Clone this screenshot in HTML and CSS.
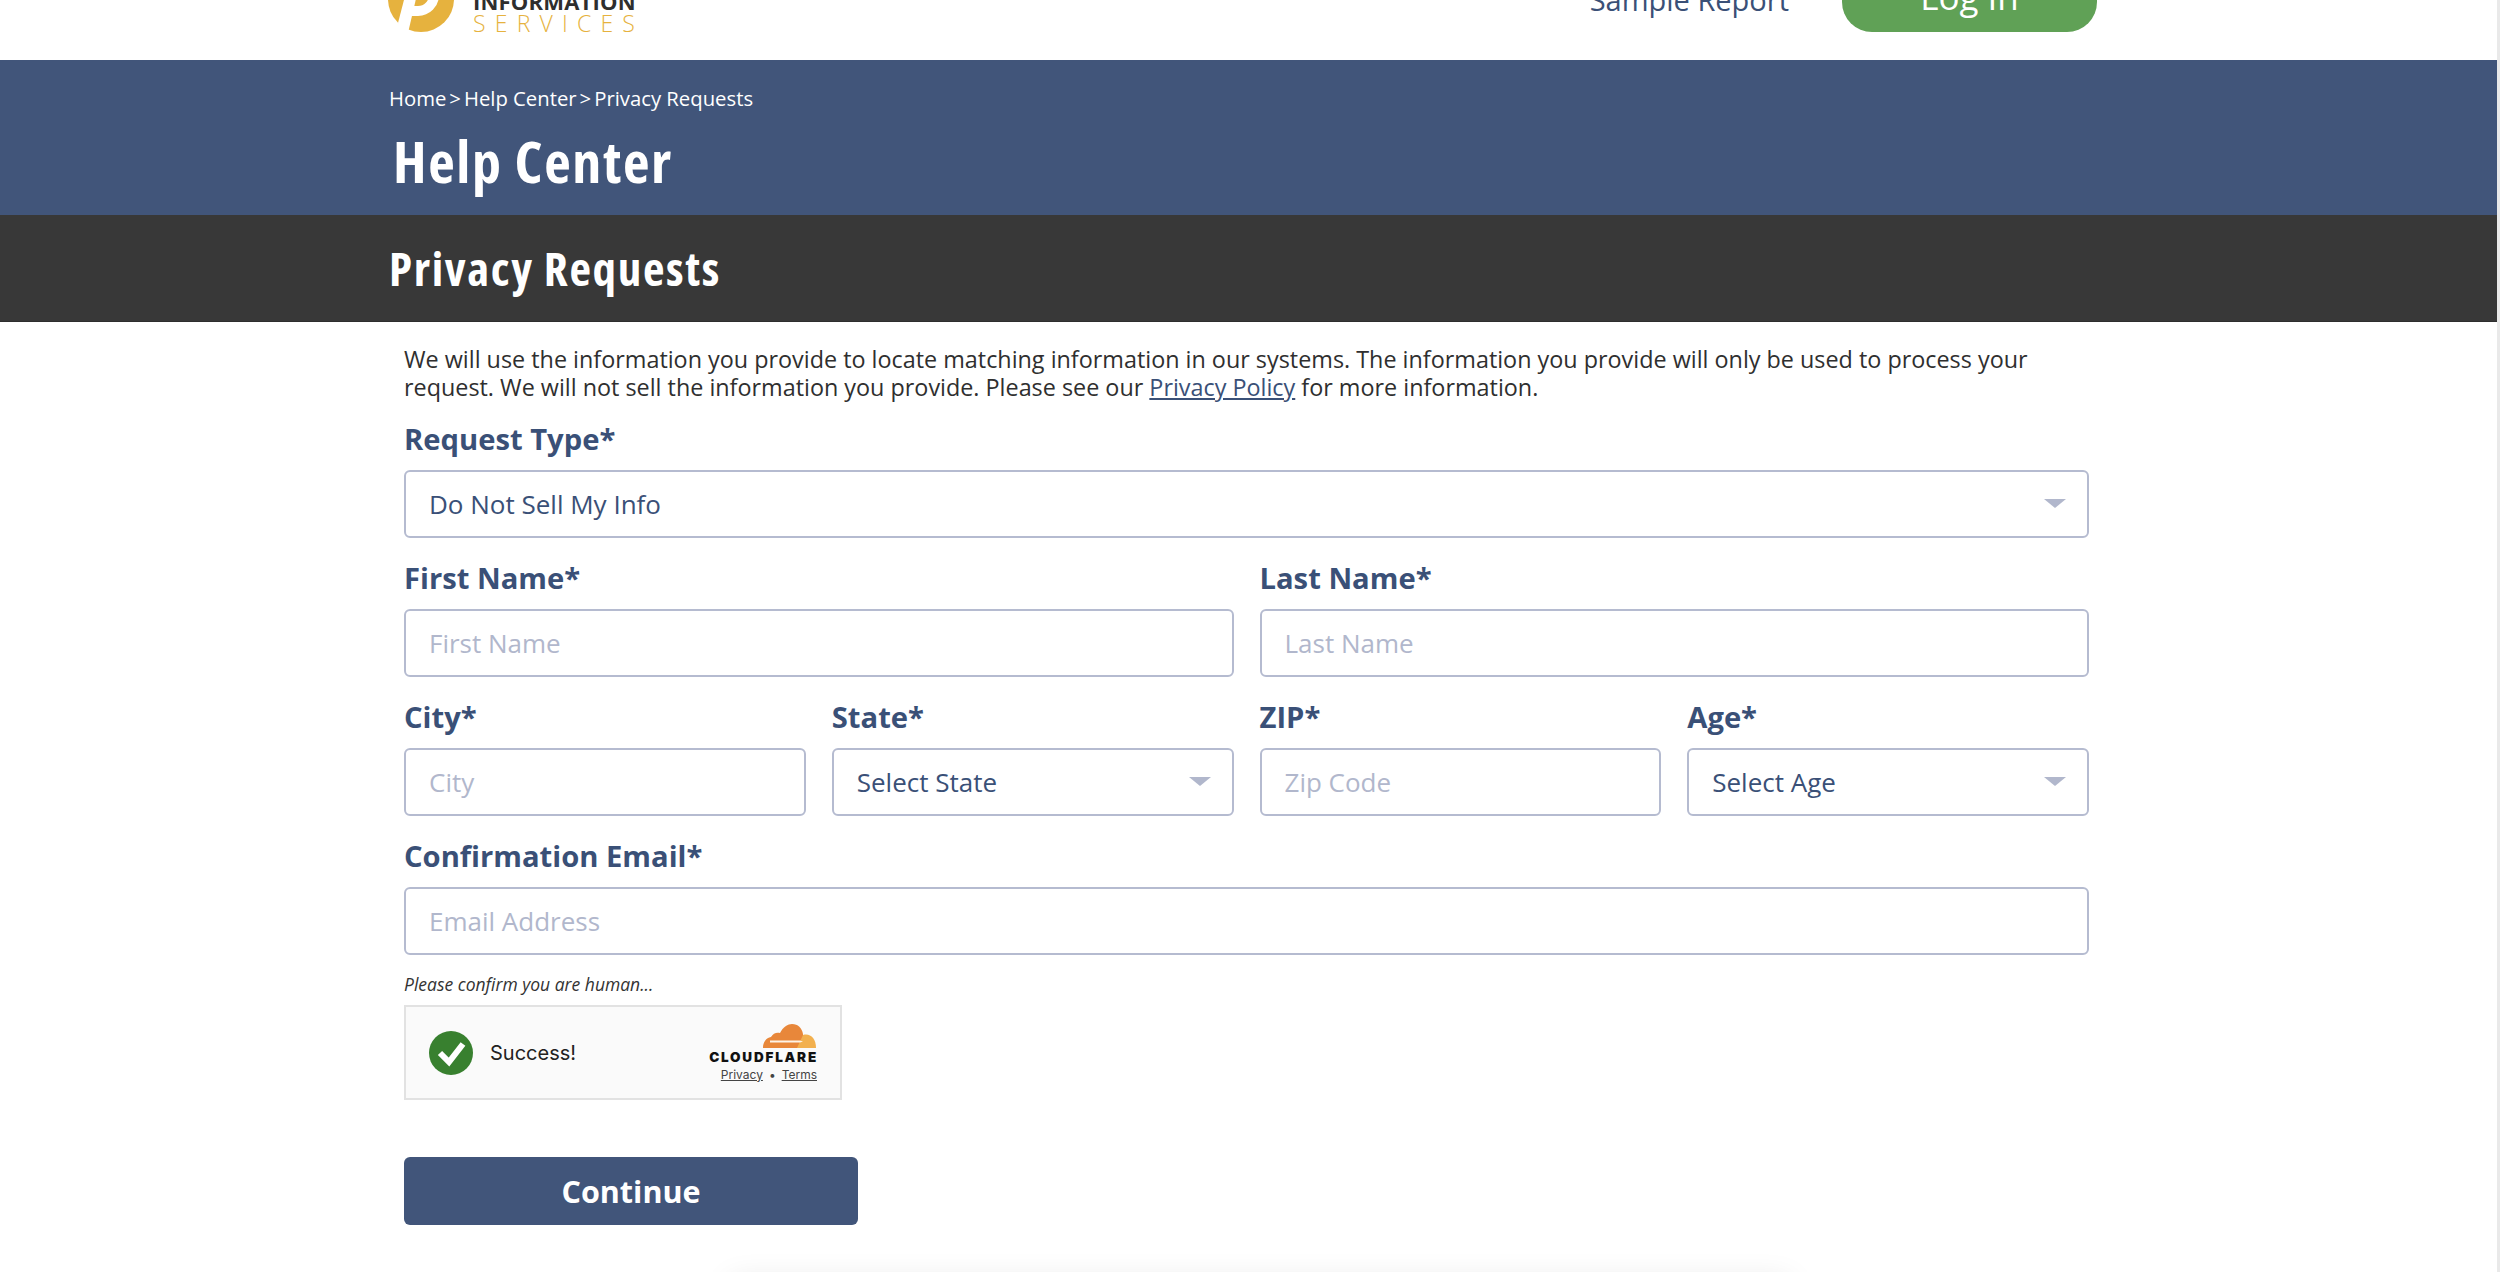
FILE: index.html
```html
<!DOCTYPE html>
<html lang="en">
<head>
    <meta charset="UTF-8">
    <title>Help Center | Privacy Requests</title>
    <link rel="stylesheet" href="styles.css">
</head>
<body>

<div class="page">
    <header class="site-header">
        <div class="logo">
            <svg class="logo-mark" width="68" height="68" viewBox="0 0 68 68">
                <circle cx="34" cy="34" r="33" fill="#e6b23e"/>
                <path d="M24 8 H35 L21 68 L11 58 Z" fill="#fff"/>
                <path d="M28 14 H31 A16 16 0 0 1 31 46 H24" fill="none" stroke="#fff" stroke-width="10"/>
            </svg>
            <div class="logo-text">
                <span class="logo-top">INFORMATION</span>
                <span class="logo-bottom">SERVICES</span>
            </div>
        </div>
        <nav class="top-nav">
            <a href="#" class="sample-link">Sample Report</a>
            <a href="#" class="login-btn">Log In</a>
        </nav>
    </header>

    <section class="hero">
        <div class="crumbs">
            <a href="#">Home</a><span class="sep">&gt;</span><a href="#">Help Center</a><span class="sep">&gt;</span><a href="#">Privacy Requests</a>
        </div>
        <h1>Help Center</h1>
    </section>

    <section class="sub-bar">
        <h2>Privacy Requests</h2>
    </section>

    <main class="content">
        <p class="intro">We will use the information you provide to locate matching information in our systems. The information you provide will only be used to process your request. We will not sell the information you provide. Please see our <a href="#">Privacy Policy</a> for more information.</p>

        <form class="request-form">
            <div class="field">
                <label>Request Type*</label>
                <div class="select-wrap">
                    <select><option>Do Not Sell My Info</option></select>
                </div>
            </div>

            <div class="row row-2">
                <div class="field">
                    <label>First Name*</label>
                    <input type="text" placeholder="First Name">
                </div>
                <div class="field">
                    <label>Last Name*</label>
                    <input type="text" placeholder="Last Name">
                </div>
            </div>

            <div class="row row-4">
                <div class="field">
                    <label>City*</label>
                    <input type="text" placeholder="City">
                </div>
                <div class="field">
                    <label>State*</label>
                    <div class="select-wrap">
                        <select><option>Select State</option></select>
                    </div>
                </div>
                <div class="field">
                    <label>ZIP*</label>
                    <input type="text" placeholder="Zip Code">
                </div>
                <div class="field">
                    <label>Age*</label>
                    <div class="select-wrap">
                        <select><option>Select Age</option></select>
                    </div>
                </div>
            </div>

            <div class="field">
                <label>Confirmation Email*</label>
                <input type="text" placeholder="Email Address">
            </div>

            <p class="human-note">Please confirm you are human...</p>

            <div class="captcha">
                <svg class="captcha-check" width="44" height="44" viewBox="0 0 44 44">
                    <circle cx="22" cy="22" r="22" fill="#38802f"/>
                    <path d="M11 22 L20 31 L34 13" fill="none" stroke="#fff" stroke-width="6"/>
                </svg>
                <span class="captcha-msg">Success!</span>
                <div class="cf-brand">
                    <svg class="cf-cloud" width="54" height="24" viewBox="0 0 54 24">
                        <path d="M0 24 C0 18 3 14 8 13 C10 9 14 8 17 9 C20 3 25 0 29 0 C35 0 39 4 40 10 L40 24 Z" fill="#e8873a"/>
                        <path d="M40 11 C47 9 53 14 53 24 L34 24 Z" fill="#f2b04e"/>
                        <path d="M7 16.500 H37 L40 17.500 L37 18.500 H7 Z" fill="#fdf3e6"/>
                    </svg>
                    <span class="cf-name">CLOUDFLARE</span>
                    <div class="cf-links"><a href="#">Privacy</a><span>&bull;</span><a href="#">Terms</a></div>
                </div>
            </div>

            <button type="button" class="continue-btn">Continue</button>
        </form>
    </main>

    <div class="footer-edge"></div>
</div>

</body>
</html>
```

FILE: styles.css
```css
:root {
    --navy: #41557a;
    --label: #3a5077;
    --field-line: #b5bbd0;
    --hint: #b1b7cc;
    --gold: #e6b23e;
}

html, body { margin: 0; height: 100%; }
body { background: #e9e9e9; color: #2b2b2b; font-family: "Open Sans", sans-serif; }

.page { width: 2497px; height: 1272px; overflow: hidden; position: relative; background: #fff; }

/* header is scrolled partly out of view */
.site-header {
    height: 60px;
    box-sizing: border-box;
    overflow: hidden;
    padding: 0 400px 0 387px;
    display: flex;
    justify-content: space-between;
    align-items: flex-end;
}

.logo { display: flex; align-items: flex-end; gap: 18px; padding-bottom: 28px; }
.logo-mark { display: block; flex: none; margin-bottom: -1px; }
.logo-text { display: flex; flex-direction: column; }
.logo-top { font-size: 22px; line-height: 26px; font-weight: 700; color: #2e2e2e; letter-spacing: 0.2px; }
.logo-bottom { font-size: 23px; line-height: 24px; font-weight: 300; color: var(--gold); letter-spacing: 9.2px; margin-top: -3px; margin-bottom: -3px; }

.top-nav { display: flex; align-items: flex-end; gap: 53px; padding-bottom: 28px; }
.sample-link { color: var(--label); font-size: 29px; line-height: 40px; text-decoration: none; margin-bottom: 12px; }
.login-btn {
    width: 255px;
    height: 72px;
    display: flex;
    align-items: center;
    justify-content: center;
    background: #60a156;
    color: #fff;
    border-radius: 30px;
    font-size: 35px;
    text-decoration: none;
}

.hero { height: 155px; box-sizing: border-box; background: var(--navy); color: #fff; padding: 24px 0 0 389px; }
.crumbs { font-size: 20.3px; line-height: 28px; }
.crumbs a { color: #fff; text-decoration: none; }
.crumbs .sep { margin: 0 3px 0 3px; }
.hero h1 { margin: 14px 0 0 4px; font-size: 58px; line-height: 70px; font-weight: 700; font-stretch: 87%; letter-spacing: 1.6px; }

.sub-bar { height: 107px; box-sizing: border-box; background: #383838; color: #fff; padding-left: 389px; display: flex; align-items: center; border-bottom: 1px solid #2e2e2e; }
.sub-bar h2 { margin: 0; font-size: 47px; font-weight: 700; font-stretch: 87%; letter-spacing: 1.65px; }

.content { padding: 23px 408px 0 404px; }
.intro { margin: 0; font-size: 23.37px; line-height: 28px; color: #2f2f2f; }
.intro a { color: var(--label); }

.request-form { display: flex; flex-direction: column; gap: 19px; margin-top: 17px; }
.field { display: flex; flex-direction: column; min-width: 0; }
.field label { font-size: 29.2px; line-height: 43px; font-weight: 700; color: var(--label); margin-bottom: 9px; }

.row { display: grid; gap: 26px; }
.row-2 { grid-template-columns: 1fr 1fr; }
.row-4 { grid-template-columns: repeat(4, 1fr); }

input, select {
    width: 100%;
    height: 68px;
    box-sizing: border-box;
    border: 2px solid var(--field-line);
    border-radius: 6px;
    background: #fff;
    padding: 0 23px;
    font-family: "Open Sans", sans-serif;
    font-size: 26px;
    color: var(--label);
    appearance: none;
    outline: none;
}
input::placeholder { color: var(--hint); opacity: 1; }

.select-wrap { position: relative; }
.select-wrap::after {
    content: "";
    position: absolute;
    right: 23px;
    top: 29px;
    border-left: 11px solid transparent;
    border-right: 11px solid transparent;
    border-top: 9px solid var(--hint);
}

.human-note { margin: -3px 0 0; font-size: 17.5px; line-height: 26px; font-style: italic; color: #333; }

.captcha {
    width: 438px;
    height: 95px;
    box-sizing: border-box;
    border: 2px solid #e2e2e2;
    background: #fafafa;
    display: flex;
    align-items: center;
    padding: 0 23px;
    margin-top: -11px;
    font-family: Inter, sans-serif;
}
.captcha-check { flex: none; }
.captcha-msg { margin-left: 17px; font-size: 20px; color: #222; }
.cf-brand { margin-left: auto; display: flex; flex-direction: column; align-items: flex-end; }
.cf-cloud { display: block; }
.cf-name { font-size: 13.500px; line-height: 15px; font-weight: 900; letter-spacing: 1.8px; color: #111; margin-top: 2px; margin-right: -1px; }
.cf-links { display: flex; gap: 6px; font-size: 12px; line-height: 14px; color: #444; margin-top: 3px; }
.cf-links a { color: #444; }

.continue-btn {
    width: 454px;
    height: 68px;
    margin-top: 38px;
    border: 0;
    border-radius: 6px;
    background: var(--navy);
    color: #fff;
    font-family: "Open Sans", sans-serif;
    font-size: 30.500px;
    font-weight: 700;
}

.footer-edge { position: absolute; left: 730px; width: 1060px; height: 40px; top: 1280px; box-shadow: 0 0 30px rgba(0, 0, 0, 0.1); }
```
